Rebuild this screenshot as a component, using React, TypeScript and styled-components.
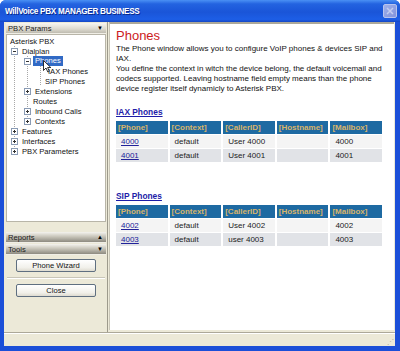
import React from "react";
import styled, { createGlobalStyle } from "styled-components";

const GlobalStyle = createGlobalStyle`
  html, body {
    margin: 0;
    padding: 0;
    background: #ffffff;
  }
  body {
    font-family: "Liberation Sans", Arial, sans-serif;
    font-size: 8px;
    color: #000;
  }
`;

type Row = { phone: string; context: string; caller: string; host: string; mailbox: string };

const iaxPhones: Row[] = [
  { phone: "4000", context: "default", caller: "User 4000", host: "", mailbox: "4000" },
  { phone: "4001", context: "default", caller: "User 4001", host: "", mailbox: "4001" },
];

const sipPhones: Row[] = [
  { phone: "4002", context: "default", caller: "User 4002", host: "", mailbox: "4002" },
  { phone: "4003", context: "default", caller: "user 4003", host: "", mailbox: "4003" },
];

const Expander = ({ open }: { open: boolean }) => (
  <ExpBox viewBox="0 0 7 7" width={7} height={7}>
    <rect x="0.5" y="0.5" width="6" height="6" fill="#fff" stroke="#8a9bb4" />
    <line x1="2" y1="3.5" x2="5" y2="3.5" stroke="#333" />
    {!open && <line x1="3.5" y1="2" x2="3.5" y2="5" stroke="#333" />}
  </ExpBox>
);

const PhoneTable = ({ rows }: { rows: Row[] }) => (
  <Table>
    <thead>
      <tr>
        <Th>[Phone]</Th>
        <Th>[Context]</Th>
        <Th>[CallerID]</Th>
        <Th>[Hostname]</Th>
        <Th>[Mailbox]</Th>
      </tr>
    </thead>
    <tbody>
      {rows.map((r, i) => (
        <tr key={r.phone}>
          <Td $alt={i % 2 === 1}>
            <CellLink href="#">{r.phone}</CellLink>
          </Td>
          <Td $alt={i % 2 === 1}>{r.context}</Td>
          <Td $alt={i % 2 === 1}>{r.caller}</Td>
          <Td $alt={i % 2 === 1}>{r.host}</Td>
          <Td $alt={i % 2 === 1}>{r.mailbox}</Td>
        </tr>
      ))}
    </tbody>
  </Table>
);

export default function App() {
  return (
    <>
      <GlobalStyle />
      <Window>
        <TitleBar>
          <Title>WillVoice PBX MANAGER BUSINESS</Title>
          <CloseBtn>
            <svg width="8" height="8" viewBox="0 0 8 8">
              <path d="M1 1L7 7M7 1L1 7" stroke="#c4cdf0" strokeWidth="1.5" />
            </svg>
          </CloseBtn>
        </TitleBar>
        <Body>
          <Main>
            <Sidebar>
              <PanelHead $dark={false}>
                <span>PBX Params</span>
                <Arrow>▼</Arrow>
              </PanelHead>
              <Tree>
                <Node>Asterisk PBX</Node>
                <Branch $line={4} $stop={5}>
                  <Node $indent={1}>
                    <Expander open />
                    <Label>Dialplan</Label>
                  </Node>
                  <Branch $line={17} $stop={15}>
                    <Node $indent={14}>
                      <Expander open />
                      <Selected>
                        Phones
                        <Cursor viewBox="0 0 8 13" width={8} height={13}>
                          <path
                            d="M0.5 0.5V10.5L3 8L4.8 12L6.3 11.3L4.6 7.5H7.8Z"
                            fill="#fff"
                            stroke="#000"
                            strokeWidth="0.8"
                          />
                        </Cursor>
                      </Selected>
                    </Node>
                    <Branch $line={30} $stop={5}>
                      <Node $indent={38}>IAX Phones</Node>
                      <Node $indent={35}>SIP Phones</Node>
                    </Branch>
                    <Node $indent={14}>
                      <Expander open={false} />
                      <Label>Extensions</Label>
                    </Node>
                    <Node $indent={23}>Routes</Node>
                    <Node $indent={14}>
                      <Expander open={false} />
                      <Label>Inbound Calls</Label>
                    </Node>
                    <Node $indent={14}>
                      <Expander open={false} />
                      <Label>Contexts</Label>
                    </Node>
                  </Branch>
                  <Node $indent={1}>
                    <Expander open={false} />
                    <span>Features</span>
                  </Node>
                  <Node $indent={1}>
                    <Expander open={false} />
                    <span>Interfaces</span>
                  </Node>
                  <Node $indent={1}>
                    <Expander open={false} />
                    <span>PBX Parameters</span>
                  </Node>
                </Branch>
              </Tree>
              <Collapsed>
                <PanelHead $dark>
                  <span>Reports</span>
                  <Arrow>▲</Arrow>
                </PanelHead>
                <PanelHead $dark>
                  <span>Tools</span>
                  <Arrow>▼</Arrow>
                </PanelHead>
              </Collapsed>
              <Tools>
                <Button>Phone Wizard</Button>
                <Separator />
                <Button>Close</Button>
              </Tools>
            </Sidebar>
            <Content>
              <Heading>Phones</Heading>
              <Intro>
                The Phone window allows you to configure VoIP phones &amp; devices SIP and IAX.
                <br />
                You define the context in witch the device belong, the default voicemail and codecs
                supported. Leaving hostname field empty means than the phone device register itself
                dynamicly to Asterisk PBX.
              </Intro>
              <SectionLink href="#">IAX Phones</SectionLink>
              <PhoneTable rows={iaxPhones} />
              <SectionLink href="#" $gap>
                SIP Phones
              </SectionLink>
              <PhoneTable rows={sipPhones} />
            </Content>
          </Main>
          <StatusBar>
            <Grip>⋰</Grip>
          </StatusBar>
        </Body>
      </Window>
    </>
  );
}

const Window = styled.div`
  width: 400px;
  height: 351px;
  display: flex;
  flex-direction: column;
  background: #1b4fd8;
  border-radius: 6px 6px 0 0;
  overflow: hidden;
  box-sizing: border-box;
`;

const TitleBar = styled.div`
  height: 22px;
  flex: none;
  display: flex;
  align-items: center;
  justify-content: space-between;
  padding: 0 3px 0 5px;
  background: linear-gradient(#4a90f4 0%, #2363e0 18%, #1a55d8 55%, #1d5ee6 88%, #1446c4 100%);
`;

const Title = styled.div`
  color: #fff;
  font-weight: bold;
  font-size: 8.2px;
  letter-spacing: -0.3px;
  text-shadow: 1px 1px 0 #0a2a8a;
`;

const CloseBtn = styled.div`
  width: 14px;
  height: 14px;
  box-sizing: border-box;
  border: 1px solid #b8c4ee;
  border-radius: 2px;
  background: linear-gradient(135deg, #9fb0ea, #8193dc);
  display: flex;
  align-items: center;
  justify-content: center;
`;

const Body = styled.div`
  flex: 1;
  display: flex;
  flex-direction: column;
  background: #ece9d8;
  margin: 0 5px 5px 4px;
`;

const Main = styled.div`
  flex: 1;
  display: flex;
  border-bottom: 1px solid #aca899;
`;

const Sidebar = styled.div`
  width: 104px;
  flex: none;
  display: flex;
  flex-direction: column;
  padding: 1px 0 0 2px;
  box-sizing: border-box;
  border-right: 1px solid #9d9a8c;
`;

const PanelHead = styled.div<{ $dark: boolean }>`
  width: 100px;
  height: 11px;
  box-sizing: border-box;
  display: flex;
  align-items: center;
  justify-content: space-between;
  padding: 0 3px 0 2px;
  font-size: 7.6px;
  color: #1a1a1a;
  background: ${(p) =>
    p.$dark
      ? "linear-gradient(#f4f3ee 0%, #c9c6bb 45%, #8d8a80 100%)"
      : "linear-gradient(#f7f6f1 0%, #dcd9cf 60%, #bfbcb1 100%)"};
  border-bottom: 1px solid #f0eee6;
`;

const Arrow = styled.span`
  font-size: 6px;
  color: #000;
`;

const Tree = styled.div`
  width: 100px;
  height: 188px;
  box-sizing: border-box;
  background: #fff;
  border: 1px solid #b8b5a8;
  padding: 1px 0 0 3px;
  font-size: 7.6px;
  display: flex;
  flex-direction: column;
`;

const Branch = styled.div<{ $line: number; $stop: number }>`
  display: flex;
  flex-direction: column;
  background-image: linear-gradient(#a8a8a8 50%, transparent 50%);
  background-size: 1px 2px;
  background-repeat: repeat-y;
  background-position: ${(p) => p.$line}px 0;
  background-clip: content-box;
  padding-bottom: ${(p) => p.$stop}px;
  margin-bottom: -${(p) => p.$stop}px;
`;

const Node = styled.div<{ $indent?: number }>`
  height: 10px;
  flex: none;
  display: flex;
  align-items: center;
  padding-left: ${(p) => p.$indent ?? 0}px;
  white-space: nowrap;
  color: #111;
  & > span {
    margin-left: 4px;
  }
`;

const Label = styled.span``;

const ExpBox = styled.svg`
  flex: none;
  position: relative;
`;

const Selected = styled.span`
  position: relative;
  background: #316ac5;
  color: #fff;
  padding: 0 2px;
  line-height: 10px;
  && {
    margin-left: 2px;
  }
`;

const Cursor = styled.svg`
  position: absolute;
  left: 10px;
  top: 4px;
`;

const Collapsed = styled.div`
  margin-top: 10px;
  display: flex;
  flex-direction: column;
  gap: 1px;
`;

const Tools = styled.div`
  display: flex;
  flex-direction: column;
  align-items: center;
  width: 100px;
  padding-top: 4px;
  gap: 5px;
`;

const Button = styled.div`
  width: 80px;
  height: 13px;
  box-sizing: border-box;
  border: 1px solid #5f6f80;
  border-radius: 2px;
  background: linear-gradient(#ffffff, #f1f0ea 70%, #dedbd0);
  display: flex;
  align-items: center;
  justify-content: center;
  font-size: 7.6px;
  color: #111;
`;

const Separator = styled.div`
  width: 98px;
  height: 1px;
  background: #c8c5b8;
  border-bottom: 1px solid #fff;
`;

const Content = styled.div`
  flex: 1;
  background: #fff;
  margin: 0 2px 2px 1px;
  border-top: 2px solid #aca899;
  border-left: 1px solid #c9c6b8;
  padding: 4px 8px 0 6px;
  display: flex;
  flex-direction: column;
  align-items: flex-start;
`;

const Heading = styled.h1`
  margin: 0;
  font-size: 13px;
  font-weight: normal;
  color: #cc1a22;
  line-height: 16px;
`;

const Intro = styled.p`
  margin: 0;
  font-size: 8px;
  line-height: 10px;
  color: #111;
  width: 270px;
`;

const SectionLink = styled.a<{ $gap?: boolean }>`
  margin-top: ${(p) => (p.$gap ? 28 : 13)}px;
  font-size: 8.4px;
  font-weight: bold;
  color: #1d1da8;
  text-decoration: underline;
  line-height: 10px;
`;

const Table = styled.table`
  width: 270px;
  margin-top: 3px;
  border-collapse: separate;
  border-spacing: 2px 1px;
  margin-left: -2px;
  font-size: 8px;
`;

const Th = styled.th`
  background: #1e6aa2;
  color: #d8b46a;
  font-weight: bold;
  text-align: left;
  height: 13px;
  padding: 0 2px;
  width: 20%;
`;

const Td = styled.td<{ $alt: boolean }>`
  background: ${(p) => (p.$alt ? "#e1e3e7" : "#f4f4f4")};
  height: 13px;
  padding: 0 0 0 5px;
  color: #222;
`;

const CellLink = styled.a`
  color: #22229a;
  text-decoration: underline;
`;

const StatusBar = styled.div`
  height: 12px;
  flex: none;
  border-top: 1px solid #fff;
  display: flex;
  justify-content: flex-end;
  align-items: flex-end;
`;

const Grip = styled.span`
  font-size: 7px;
  color: #aca899;
  line-height: 8px;
  padding-right: 1px;
`;
